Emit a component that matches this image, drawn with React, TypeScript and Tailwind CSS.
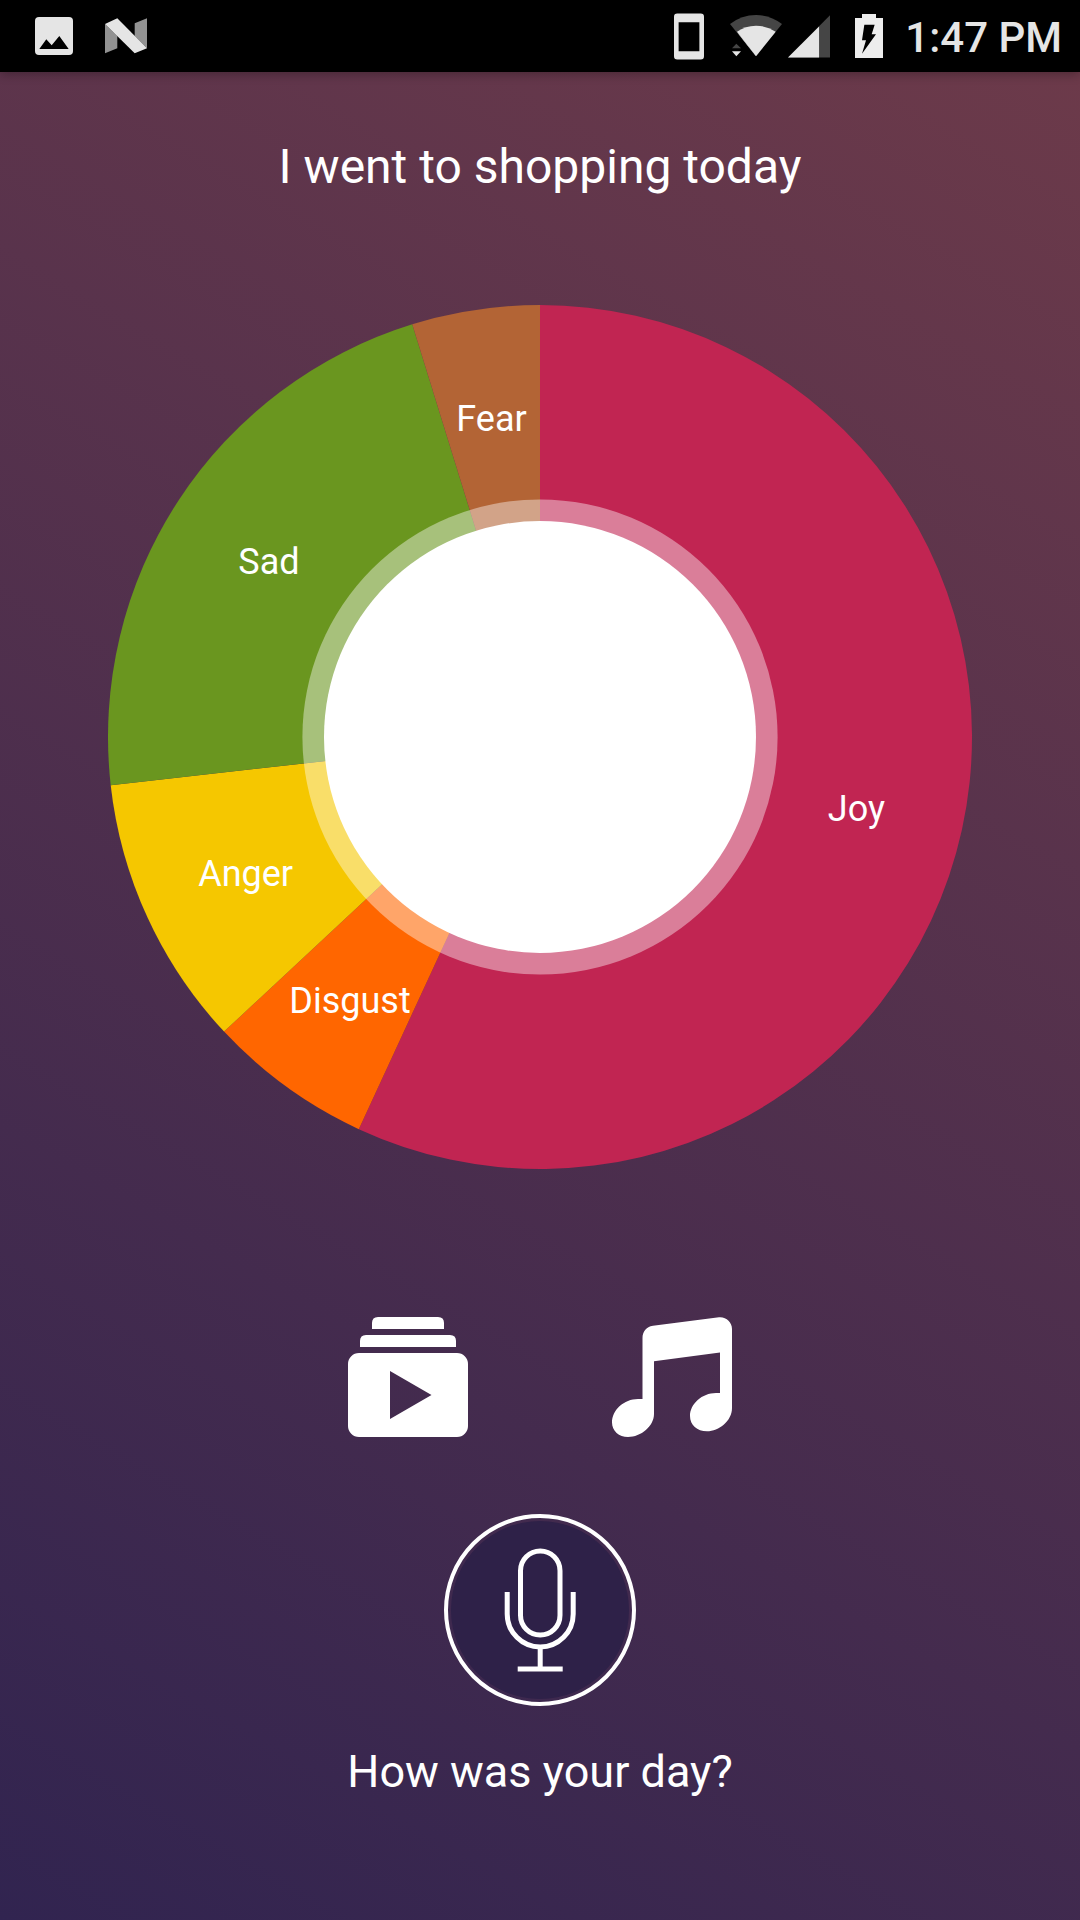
import React from 'react';

// --- Types ---
interface Emotion {
  name: string;
  start: number;
  end: number;
  color: string;
}

// Angles in degrees, clockwise from the top
const emotions: Emotion[] = [
  { name: 'Joy', start: 0, end: 204.8, color: '#c12552' },
  { name: 'Disgust', start: 204.8, end: 227, color: '#ff6600' },
  { name: 'Anger', start: 227, end: 263.6, color: '#f5c700' },
  { name: 'Sad', start: 263.6, end: 342.8, color: '#6a961f' },
  { name: 'Fear', start: 342.8, end: 360, color: '#b36435' },
];

const RADIUS = 432;
const LABEL_RADIUS = 324;

function pointAt(angle: number, radius: number) {
  const rad = (angle * Math.PI) / 180;
  return { x: RADIUS + radius * Math.sin(rad), y: RADIUS - radius * Math.cos(rad) };
}

function slicePath({ start, end }: Emotion) {
  const from = pointAt(start, RADIUS);
  const to = pointAt(end, RADIUS);
  const large = end - start > 180 ? 1 : 0;
  return `M${RADIUS} ${RADIUS} L${from.x} ${from.y} A${RADIUS} ${RADIUS} 0 ${large} 1 ${to.x} ${to.y} Z`;
}

function StatusBar() {
  return (
    <header className="relative z-10 flex h-[72px] items-center justify-between bg-black pl-[35px] pr-[18px] text-[#e5e5e5] shadow-[0_2px_10px_rgba(0,0,0,0.3)]">
      <div className="flex items-center gap-8">
        <svg className="h-[38px] w-[38px]" viewBox="0 0 38 38">
          <rect width="38" height="38" rx="4" fill="currentColor" />
          <path d="M4.3 32 11.3 22.3 16.7 28.3 24.3 19 33.7 32Z" fill="#000" />
        </svg>
        <svg className="h-[36px] w-[42px]" viewBox="0 0 42 36">
          <path d="M0 6 12.3 18V30.3L0 35.3ZM29.7 5.3 42 .3V30.3L29.7 18Z" fill="#929292" />
          <path d="M0 6 12.3 .3 42 30.3 29.7 35.3Z" fill="currentColor" />
        </svg>
      </div>

      <div className="flex items-center">
        {/* Phone */}
        <svg className="h-[47px] w-[30px]" viewBox="40 39 91 140">
          <path d="M50 39H121Q131 39 131 49V169Q131 179 121 179H50Q40 179 40 169V49Q40 39 50 39ZM54 66V154H117V66Z" fill="currentColor" fillRule="evenodd" />
        </svg>
        {/* Wifi */}
        <svg className="ml-[26px] h-[42px] w-[52px]" viewBox="210 47 156 126">
          <path d="M210 74Q245 47 288 47T366 74L288 171Z" fill="#454545" />
          <path d="M231 97Q256 79 288 79T347 97L288 171Z" fill="currentColor" />
          <path d="M210 125H240L252 147V173H210Z" fill="#000" />
          <path d="M231 97 240 108 288 171 262 138Z" fill="currentColor" />
          <path d="M216 147 229 133 243 147Z" fill="#454545" />
          <path d="M216 156H243L229 171Z" fill="currentColor" />
        </svg>
        {/* Signal */}
        <svg className="ml-[6px] h-[43px] w-[42px]" viewBox="383 43 127 129">
          <path d="M510 43V171H383Z" fill="#454545" />
          <path d="M477 77V171H383Z" fill="currentColor" />
        </svg>
        {/* Battery */}
        <svg className="ml-[25px] h-[44px] w-[28px]" viewBox="585 42 84 132">
          <path d="M606 42H648V54H669V174H585V54H606Z" fill="#ededed" />
          <path d="M613 74H644L635 103H648L606 161L618 121H606Z" fill="#000" />
        </svg>
        <span className="ml-[22px] pt-1 text-[42px] leading-[48px] font-medium">1:47 PM</span>
      </div>
    </header>
  );
}

function EmotionChart() {
  return (
    <svg className="w-4/5" viewBox="0 0 864 864" role="img" aria-label="Emotions">
      {emotions.map((emotion) => (
        <path key={emotion.name} d={slicePath(emotion)} fill={emotion.color} />
      ))}
      <circle cx="432" cy="432" r="237.6" fill="#fff" fillOpacity="0.41" />
      <circle cx="432" cy="432" r="216" fill="#fff" />
      {emotions.map((emotion) => {
        const { x, y } = pointAt((emotion.start + emotion.end) / 2, LABEL_RADIUS);
        return (
          <text key={emotion.name} x={x} y={y + 14} textAnchor="middle" className="fill-white text-[36px]">
            {emotion.name}
          </text>
        );
      })}
    </svg>
  );
}

export default function App() {
  return (
    <div className="flex min-h-screen flex-col bg-[#32264f] font-['Roboto',sans-serif] text-white">
      <StatusBar />

      <main className="flex flex-1 flex-col items-center bg-[linear-gradient(30deg,#312450,#6c3a4a)] pt-[67px]">
        <h1 className="text-[48px] leading-[56px]">I went to shopping today</h1>

        <div className="mt-[110px] flex w-full justify-center">
          <EmotionChart />
        </div>

        <div className="mt-[148px] flex gap-36">
          <button aria-label="Videos" className="h-[120px] w-[120px]">
            <svg viewBox="0 0 120 120" fill="currentColor">
              <path d="M24 12V6Q24 0 30 0H90Q96 0 96 6V12Z" />
              <path d="M12 30V24Q12 18 18 18H102Q108 18 108 24V30Z" />
              <path fillRule="evenodd" d="M11 36H109A11 11 0 0 1 120 47V109A11 11 0 0 1 109 120H11A11 11 0 0 1 0 109V47A11 11 0 0 1 11 36ZM42 54V102L83.5 78Z" />
            </svg>
          </button>
          <button aria-label="Music" className="h-[120px] w-[120px]">
            <svg viewBox="0 0 120 120" fill="currentColor">
              <path d="M30.5 82V21C30.5 15 34 9.6 41 8.8L107 .3C114 -.4 120 5 120 12V91C120 104 107 114.3 95 114.3C85 114.3 78 108 78 99C78 87 90 76 104 76H108V35.5L42 44.3V97C42 109 29 120 16 120C7 120 0 114 0 105.5C0 93 12 82 26 82Z" />
            </svg>
          </button>
        </div>

        <button aria-label="Record" className="mt-[77px] h-[192px] w-[192px] rounded-full">
          <svg viewBox="0 0 192 192" fill="none" stroke="currentColor">
            <circle cx="96" cy="96" r="94" strokeWidth="4" />
            <circle cx="96" cy="96" r="89" fill="#2e2148" stroke="none" />
            <g strokeWidth="5">
              <rect x="76.5" y="37" width="39.5" height="84" rx="19.7" />
              <path d="M63.2 78V100A33 33 0 0 0 129.2 100V78M96.2 133V155M73.7 155H118.7" />
            </g>
          </svg>
        </button>

        <p className="mt-10 text-[45px] leading-[52px]">How was your day?</p>
      </main>
    </div>
  );
}
